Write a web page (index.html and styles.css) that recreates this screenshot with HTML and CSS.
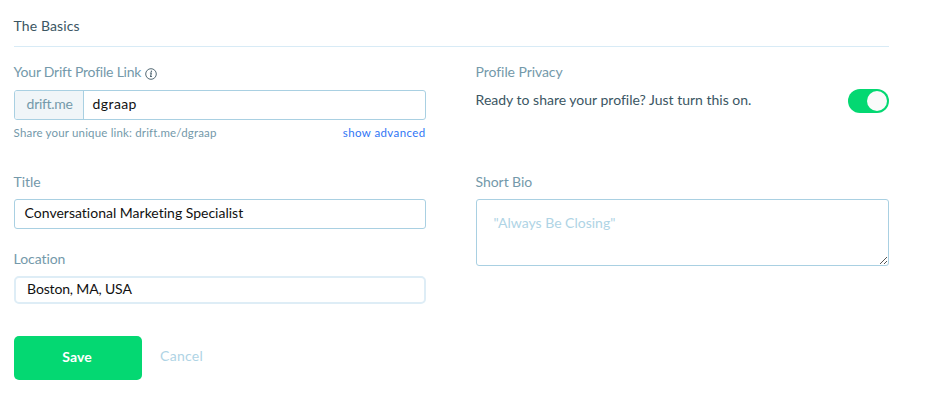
FILE: index.html
```html
<!DOCTYPE html>
<html lang="en">
<head>
<meta charset="utf-8">
<title>Profile settings</title>
<link rel="stylesheet" href="styles.css">
</head>
<body>
<main class="settings">
  <h2 class="heading">The Basics</h2>
  <form class="grid">
    <section class="link-field">
      <div class="label"><span class="link-label">Your Drift Profile Link</span>
        <svg class="info" viewBox="0 0 12 12" width="12" height="12" fill="none" stroke="#4b626e"><circle cx="6" cy="6" r="5.3" stroke-width=".95"/><path d="M4.9 5h1.4L5.6 8.5h1.3" stroke-width="1.1"/><circle cx="6.4" cy="3.2" r=".75" fill="#4b626e" stroke="none"/></svg>
      </div>
      <div class="box link-box"><span class="prefix">drift.me</span><span class="slug">dgraap</span></div>
      <div class="help"><span class="share">Share your unique link: drift.me/dgraap</span><a class="advanced">show advanced</a></div>
    </section>
    <section class="privacy">
      <div class="label">Profile Privacy</div>
      <div class="privacy-row"><span>Ready to share your profile? Just turn this on.</span><span class="toggle"><span class="knob"></span></span></div>
    </section>
    <section class="details">
      <div class="label">Title</div>
      <div class="box title-box">Conversational Marketing Specialist</div>
      <div class="label location-label">Location</div>
      <div class="location-box">Boston, MA, USA</div>
    </section>
    <section class="bio">
      <div class="label">Short Bio</div>
      <div class="box bio-box">"Always Be Closing"
        <svg class="grip" width="9" height="9" viewBox="0 0 9 9" stroke="#555" stroke-width="1"><path d="M1 8L8 1M5 8L8 5"/></svg>
      </div>
    </section>
  </form>
  <div class="actions"><span class="save">Save</span><span class="cancel">Cancel</span></div>
</main>
</body>
</html>
```
FILE: styles.css
```css
* { box-sizing: border-box; }
body {
  margin: 0;
  background: #fff;
  color: #3b5663;
  font: 14px/20px Lato, sans-serif;
  font-variant-ligatures: none;
  white-space: nowrap;
}
.settings { width: 889px; padding: 16px 0 0 13.6px; }
.heading {
  height: 31px;
  margin: 0 0 15px;
  border-bottom: 1px solid #d8ebf6;
  font-size: 14px;
  font-weight: 400;
  letter-spacing: .1px;
}
.grid {
  display: grid;
  grid-template-columns: 412px 413px;
  grid-template-rows: 109px 161px;
  column-gap: 50px;
}
.label { display: flex; height: 28px; color: #7499aa; letter-spacing: -.07px; }
.details .label, .bio .label { padding-top: 1px; }
.link-label { letter-spacing: -.22px; }
.info { margin: 6px 0 0 3.5px; }
.box { border: 1px solid #a9d0e2; border-radius: 3px; }
.link-box { display: flex; height: 30px; line-height: 26px; color: #111; overflow: hidden; }
.prefix { width: 69px; padding-left: 12px; background: #f0f5f8; border-right: 1px solid #a9d0e2; color: #7499aa; letter-spacing: -.3px; }
.slug { margin-left: 9px; letter-spacing: .4px; }
.help { display: flex; justify-content: space-between; padding-top: 3px; font-size: 11.5px; color: #7499aa; }
.share { letter-spacing: .17px; }
.advanced { color: #2f75f5; letter-spacing: .4px; }
.privacy-row { display: flex; justify-content: space-between; }
.toggle { width: 41px; height: 24px; margin-top: -1px; padding: 2px; border-radius: 12px; background: #04d872; }
.knob { display: block; width: 20px; height: 20px; margin-left: 17px; border-radius: 50%; background: #fafafa; }
.title-box { height: 30px; padding-left: 10px; line-height: 26px; color: #111; }
.details .location-label { height: 27px; margin-top: 19px; }
.location-box { height: 28px; margin-top: 1px; padding-left: 11.5px; border: 2px solid #deedf6; border-radius: 5px; line-height: 22px; color: #111; letter-spacing: -.15px; }
.bio-box { position: relative; height: 67px; padding: 13px 17px; color: #afd4e5; }
.grip { position: absolute; right: 0; bottom: 0; }
.actions { display: flex; margin-top: 4px; }
.save { width: 128px; height: 44px; padding-right: 1px; border-radius: 5px; background: #04d872; color: #fff; font-weight: 700; line-height: 42px; text-align: center; letter-spacing: .1px; }
.cancel { margin-left: 18.5px; line-height: 40px; color: #afd4e5; letter-spacing: .25px; }
```
